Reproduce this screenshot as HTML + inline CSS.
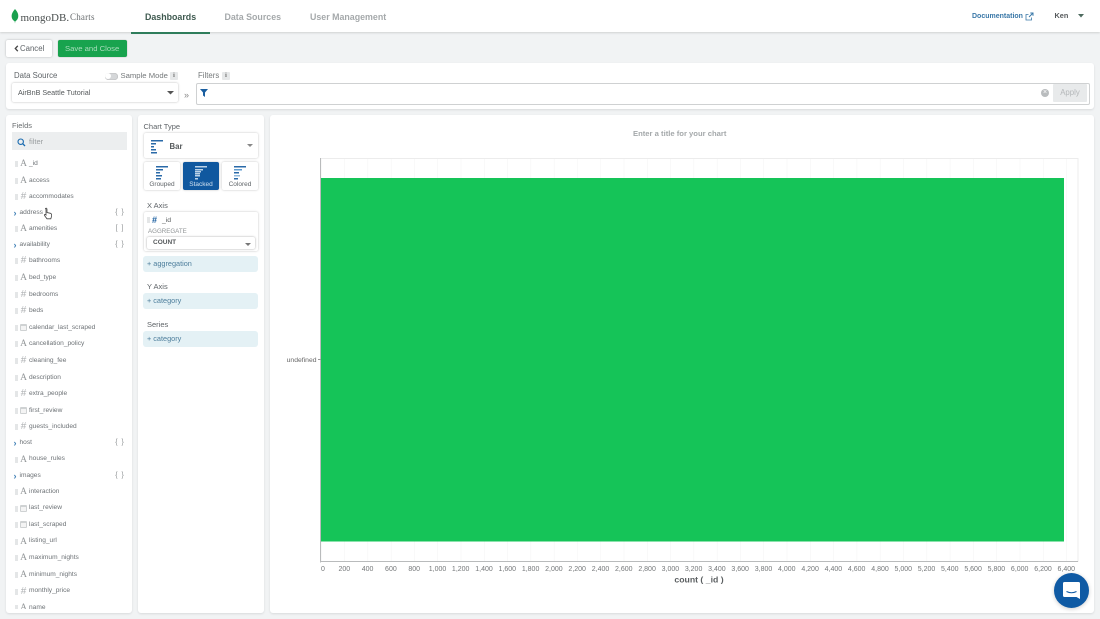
<!DOCTYPE html>
<html><head><meta charset="utf-8"><title>MongoDB Charts</title>
<style>
html,body{margin:0;padding:0;width:1100px;height:619px;overflow:hidden;background:#f1f3f4;font-family:"Liberation Sans",Arial,sans-serif;color:#5f6468}
#w{position:absolute;left:0;top:0;width:1100px;height:619px;overflow:hidden;background:#f1f3f4;filter:blur(.3px)}
.a,.t{position:absolute}
.t{white-space:nowrap;line-height:10px}
.card{position:absolute;background:#fff;border-radius:3px;box-shadow:0 1px 2px rgba(0,0,0,.1)}
.f{font-size:6.6px;color:#6d7276;height:10px;line-height:10px}
.g{position:absolute;left:15px;width:3px;height:6px;background:#e4e6e7}
.i{position:absolute;left:19.500px;width:8px;text-align:center;font-size:9.500px;line-height:10px;color:#94989a;font-family:"Liberation Serif",serif}
.h{font-family:"Liberation Sans",sans-serif;font-size:10px;color:#b0b3b5}
.c{position:absolute;left:20px;width:5px;height:4px;border:1px solid #cfd2d3;border-top:2px solid #cfd2d3;border-radius:1px;background:#f4f4f4}
.ar{position:absolute;left:13.500px;font-size:9px;font-weight:bold;line-height:10px;color:#3f7fb5}
.br{position:absolute;left:115px;width:10px;text-align:center;font-size:7px;line-height:10px;color:#8d9193;letter-spacing:1px}
.pill{position:absolute;left:143px;width:115px;background:#e4f1f5;border-radius:3px;font-size:7.300px;line-height:16px;height:16px;color:#4d7e9c;text-indent:4px}
.lb{font-size:7.500px;color:#5f6468}
.tb{position:absolute;top:162px;height:28px;background:#fff;border-radius:2px;box-shadow:0 0 2px rgba(0,0,0,.25);font-size:6.500px;text-align:center;color:#5f6468}
.tb span{position:absolute;left:0;right:0;top:19px;line-height:8px}
</style></head><body><div id="w">

<!-- Navbar -->
<div class="a" style="left:0;top:0;width:1100px;height:32px;background:#fff;box-shadow:0 1px 2px rgba(0,0,0,.14)"></div>
<svg class="a" style="left:11px;top:9px" width="8" height="15" viewBox="0 0 8 15"><path d="M4 0C6.600 3 7.600 5.200 7.200 8 6.900 10.300 5.400 11.600 4.300 12.400L4 14.500 3.700 12.400C2.500 11.500 .9 10.300.7 8 .4 5.200 1.500 3 4 0Z" fill="#1aa04e"/></svg>
<div class="t" style="left:20.500px;top:11px;font:11px/14px 'Liberation Serif',serif;color:#4a4f4f">mongoDB.</div>
<div class="t" style="left:70px;top:12px;font:9px/11px 'Liberation Serif',serif;color:#6a6e70;letter-spacing:.2px">Charts</div>
<div class="t" style="left:145px;top:11px;font-size:8.850px;line-height:12px;font-weight:bold;color:#3f5a50">Dashboards</div>
<div class="a" style="left:131px;top:32px;width:79px;height:2px;background:#2f7d5b"></div>
<div class="t" style="left:224.500px;top:11px;font-size:8.850px;line-height:12px;font-weight:bold;color:#a5a9ab">Data Sources</div>
<div class="t" style="left:310px;top:11px;font-size:8.850px;line-height:12px;font-weight:bold;color:#a5a9ab">User Management</div>
<div class="t" style="left:972px;top:12px;font-size:7px;font-weight:bold;color:#3a78a8">Documentation</div>
<svg class="a" style="left:1025px;top:12px" width="9" height="9" viewBox="0 0 9 9"><path d="M6.500 5.500V8H1V2.500H3.500" fill="none" stroke="#3a78a8" stroke-width=".8"/><path d="M4 5L7.500 1.500M5.300 1H8V3.700" fill="none" stroke="#3a78a8" stroke-width="1"/></svg>
<div class="t" style="left:1054.500px;top:11px;font-size:7.300px;font-weight:bold;color:#55595b">Ken</div>
<svg class="a" style="left:1078px;top:14px" width="6" height="4"><path d="M0 0H6L3 3.500Z" fill="#4d6a5e"/></svg>

<!-- Buttons -->
<div class="a" style="left:6px;top:40px;width:46px;height:17px;background:#fff;border-radius:2px;box-shadow:0 0 2px rgba(0,0,0,.25)"></div>
<svg class="a" style="left:14px;top:45px" width="5" height="7"><path d="M3.800 .8L1.300 3.500 3.800 6.200" fill="none" stroke="#444" stroke-width="1.300"/></svg>
<div class="t" style="left:20px;top:43.500px;font-size:7.800px;color:#5f6468">Cancel</div>
<div class="a" style="left:58px;top:40px;width:69px;height:17px;background:#18a34e;border-radius:2px;box-shadow:0 0 1px rgba(0,0,0,.4)"></div>
<div class="t" style="left:65px;top:43.500px;font-size:7.700px;color:#a8dcbb">Save and Close</div>

<!-- Data bar -->
<div class="card" style="left:6px;top:63px;width:1088px;height:46px"></div>
<div class="t" style="left:14px;top:71px;font-size:7.800px;color:#5f6468">Data Source</div>
<div class="a" style="left:104.500px;top:72.500px;width:13px;height:7px;border-radius:4px;background:#d5d7d9;box-shadow:inset 0 0 1px #888"></div>
<div class="a" style="left:105px;top:73px;width:6px;height:6px;border-radius:3px;background:#fff"></div>
<div class="t" style="left:120.500px;top:71px;font-size:7.700px;color:#75797b">Sample Mode</div>
<div class="a" style="left:170px;top:71.500px;width:8px;height:8px;background:#e6e8e9;border-radius:1px;font:bold 6px/8px 'Liberation Serif',serif;text-align:center;color:#666">i</div>
<div class="t" style="left:198px;top:71px;font-size:7.800px;color:#75797b">Filters</div>
<div class="a" style="left:222px;top:71.500px;width:8px;height:8px;background:#e6e8e9;border-radius:1px;font:bold 6px/8px 'Liberation Serif',serif;text-align:center;color:#666">i</div>
<div class="a" style="left:12px;top:83px;width:166px;height:19px;background:#fff;border-radius:2px;box-shadow:0 0 2px rgba(0,0,0,.28)"></div>
<div class="t" style="left:18px;top:88px;font-size:7.200px;color:#55595b">AirBnB Seattle Tutorial</div>
<svg class="a" style="left:167px;top:90.500px" width="7" height="4"><path d="M0 0H7L3.500 3.500Z" fill="#555"/></svg>
<div class="t" style="left:184px;top:90px;font-size:9px;color:#888">»</div>
<div class="a" style="left:195.500px;top:82.500px;width:892px;height:20px;background:#fff;border:1px solid #cfd1d2;border-radius:2px"></div>
<svg class="a" style="left:200px;top:89px" width="8" height="8"><path d="M0 0H8L5 3.500V8L3 6.500V3.500Z" fill="#1a5ea0"/></svg>
<div class="a" style="left:1041px;top:89px;width:8px;height:8px;border-radius:4px;background:#b9bcbe;color:#fff;font-size:7px;line-height:8px;text-align:center">×</div>
<div class="a" style="left:1053px;top:84px;width:34px;height:18px;background:#e8eaeb;border-radius:1px;font-size:7.800px;line-height:18px;text-align:center;color:#b4b7b9">Apply</div>

<!-- Fields panel -->
<div class="card" style="left:6px;top:115px;width:126px;height:498px;overflow:hidden"></div>
<div class="t" style="left:12px;top:121px;font-size:7.500px;color:#6b6f71">Fields</div>
<div class="a" style="left:12px;top:132px;width:115px;height:18px;background:#eceeef"></div>
<svg class="a" style="left:17px;top:137.500px" width="9" height="9" viewBox="0 0 9 9"><circle cx="3.700" cy="3.700" r="2.700" fill="none" stroke="#1a6bb0" stroke-width="1.100"/><path d="M5.700 5.700L8 8" stroke="#1a6bb0" stroke-width="1.300"/></svg>
<div class="t" style="left:29px;top:136.500px;font-size:7.500px;color:#9a9ea0">filter</div>

<div class="a" style="left:0;top:115px;width:132px;height:494px;overflow:hidden">
<div class="a" style="left:0;top:-114px;width:132px;height:640px">
<div class="g" style="top:160px"></div><div class="i" style="top:158px">A</div><div class="t f" style="left:29px;top:158px">_id</div>
<div class="g" style="top:177px"></div><div class="i" style="top:175px">A</div><div class="t f" style="left:29px;top:175px">access</div>
<div class="g" style="top:193px"></div><div class="i h" style="top:191px">#</div><div class="t f" style="left:29px;top:191px">accommodates</div>
<div class="ar" style="top:207px">›</div><div class="t f" style="left:19.500px;top:207px">address</div><div class="br" style="top:207px">{ }</div>
<div class="g" style="top:225px"></div><div class="i" style="top:223px">A</div><div class="t f" style="left:29px;top:223px">amenities</div><div class="br" style="top:223px">[ ]</div>
<div class="ar" style="top:239px">›</div><div class="t f" style="left:19.500px;top:239px">availability</div><div class="br" style="top:239px">{ }</div>
<div class="g" style="top:257px"></div><div class="i h" style="top:255px">#</div><div class="t f" style="left:29px;top:255px">bathrooms</div>
<div class="g" style="top:274px"></div><div class="i" style="top:272px">A</div><div class="t f" style="left:29px;top:272px">bed_type</div>
<div class="g" style="top:291px"></div><div class="i h" style="top:289px">#</div><div class="t f" style="left:29px;top:289px">bedrooms</div>
<div class="g" style="top:307px"></div><div class="i h" style="top:305px">#</div><div class="t f" style="left:29px;top:305px">beds</div>
<div class="g" style="top:324px"></div><div class="c" style="top:323px"></div><div class="t f" style="left:29px;top:322px">calendar_last_scraped</div>
<div class="g" style="top:340px"></div><div class="i" style="top:338px">A</div><div class="t f" style="left:29px;top:338px">cancellation_policy</div>
<div class="g" style="top:357px"></div><div class="i h" style="top:355px">#</div><div class="t f" style="left:29px;top:355px">cleaning_fee</div>
<div class="g" style="top:374px"></div><div class="i" style="top:372px">A</div><div class="t f" style="left:29px;top:372px">description</div>
<div class="g" style="top:390px"></div><div class="i h" style="top:388px">#</div><div class="t f" style="left:29px;top:388px">extra_people</div>
<div class="g" style="top:407px"></div><div class="c" style="top:406px"></div><div class="t f" style="left:29px;top:405px">first_review</div>
<div class="g" style="top:423px"></div><div class="i h" style="top:421px">#</div><div class="t f" style="left:29px;top:421px">guests_included</div>
<div class="ar" style="top:437px">›</div><div class="t f" style="left:19.500px;top:437px">host</div><div class="br" style="top:437px">{ }</div>
<div class="g" style="top:456px"></div><div class="i" style="top:454px">A</div><div class="t f" style="left:29px;top:453px">house_rules</div>
<div class="ar" style="top:470px">›</div><div class="t f" style="left:19.500px;top:470px">images</div><div class="br" style="top:470px">{ }</div>
<div class="g" style="top:488px"></div><div class="i" style="top:486px">A</div><div class="t f" style="left:29px;top:486px">interaction</div>
<div class="g" style="top:505px"></div><div class="c" style="top:504px"></div><div class="t f" style="left:29px;top:502px">last_review</div>
<div class="g" style="top:521px"></div><div class="c" style="top:520px"></div><div class="t f" style="left:29px;top:519px">last_scraped</div>
<div class="g" style="top:538px"></div><div class="i" style="top:536px">A</div><div class="t f" style="left:29px;top:535px">listing_url</div>
<div class="g" style="top:554px"></div><div class="i" style="top:552px">A</div><div class="t f" style="left:29px;top:552px">maximum_nights</div>
<div class="g" style="top:571px"></div><div class="i" style="top:569px">A</div><div class="t f" style="left:29px;top:569px">minimum_nights</div>
<div class="g" style="top:588px"></div><div class="i h" style="top:586px">#</div><div class="t f" style="left:29px;top:585px">monthly_price</div>
<div class="g" style="top:604px"></div><div class="i" style="top:602px">A</div><div class="t f" style="left:29px;top:602px">name</div>
</div></div>
<!-- cursor -->
<svg class="a" style="left:43px;top:207px" width="10" height="13" viewBox="0 0 10 13"><path d="M2.500 1.500C3.500 .8 4 1.500 4 2.500V5.500L7.500 6.300C8.800 6.800 8.800 8 8.500 9.500L7.800 11.800H4L1.500 8.500C1 7.500 2 7 3 8V2.500Z" fill="#fff" stroke="#444" stroke-width=".8"/></svg>

<!-- Chart builder panel -->
<div class="card" style="left:138px;top:115px;width:126px;height:498px"></div>
<div class="t lb" style="left:143.500px;top:122px">Chart Type</div>
<div class="a" style="left:143.500px;top:133px;width:114px;height:25px;background:#fff;border-radius:2px;box-shadow:0 0 2px rgba(0,0,0,.25)"></div>
<svg class="a" style="left:150px;top:139px" width="15" height="15"><path d="M1 1h12v1.500H1zM1 4h5v1.500H1zM1 7h3v1.500H1zM1 10h5v1.500H1zM1 13h6v1.500H1z" fill="#2a6aa8"/></svg>
<div class="t" style="left:169.500px;top:141.500px;font-size:7.800px;font-weight:bold;color:#55595b">Bar</div>
<svg class="a" style="left:247px;top:144px" width="6" height="4"><path d="M0 0H6L3 3Z" fill="#888"/></svg>

<div class="tb" style="left:144px;width:36px"><svg class="a" style="left:11px;top:3px" width="14" height="15"><path d="M1 1h12v1.500H1zM1 4h7v1.500H1zM1 7h4v1.500H1zM1 10h6v1.500H1zM1 13h5v1.500H1z" fill="#2a6aa8"/></svg><span>Grouped</span></div>
<div class="tb" style="left:183px;width:36px;background:#10589f;color:#cfe0ef"><svg class="a" style="left:11px;top:3px" width="14" height="15"><path d="M1 1h12v1.500H1zM1 4h8v1.500H1zM1 6h6v1.500H1zM1 8h5v1.500H1zM1 10h5v1.500H1zM1 13h3v1.500H1z" fill="#bcd3e8"/></svg><span>Stacked</span></div>
<div class="tb" style="left:222px;width:36px"><svg class="a" style="left:11px;top:3px" width="14" height="15"><path d="M1 1h12v1.500H1z" fill="#2a6aa8"/><path d="M1 4h8v1.500H1z" fill="#5d9bd0"/><path d="M1 7h5v1.500H1z" fill="#2a6aa8"/><path d="M1 10h6v1.500H1z" fill="#8fb9dc"/><path d="M1 13h4v1.500H1z" fill="#2a6aa8"/></svg><span>Colored</span></div>

<div class="t lb" style="left:147px;top:201px">X Axis</div>
<div class="a" style="left:143.500px;top:212px;width:114px;height:39px;background:#fff;border-radius:2px;box-shadow:0 0 2px rgba(0,0,0,.25)"></div>
<div class="a" style="left:146.500px;top:217px;width:3px;height:6px;background:#e4e6e7"></div>
<div class="t" style="left:152px;top:215px;font-size:9px;font-weight:bold;color:#1a5ea0">#</div>
<div class="t" style="left:162px;top:215.500px;font-size:6.800px;color:#55595b">_id</div>
<div class="t" style="left:148px;top:227px;font-size:6.200px;color:#909496">AGGREGATE</div>
<div class="a" style="left:146.500px;top:237px;width:108px;height:12px;background:#fff;border-radius:2px;box-shadow:0 0 2px rgba(0,0,0,.35)"></div>
<div class="t" style="left:153px;top:238px;font-size:6.500px;font-weight:bold;color:#55595b">COUNT</div>
<svg class="a" style="left:244.500px;top:242.500px" width="6" height="4"><path d="M0 0H6L3 3Z" fill="#777"/></svg>
<div class="pill" style="top:255.500px">+ aggregation</div>
<div class="t lb" style="left:147px;top:282px">Y Axis</div>
<div class="pill" style="top:293px">+ category</div>
<div class="t lb" style="left:147px;top:320px">Series</div>
<div class="pill" style="top:331px">+ category</div>

<!-- Chart panel -->
<div class="card" style="left:270px;top:115px;width:824px;height:498px"></div>
<div class="t" style="left:633px;top:129px;font-size:7.650px;font-weight:bold;color:#a4a8aa">Enter a title for your chart</div>
<svg class="a" style="left:270px;top:150px" width="824" height="450" viewBox="270 150 824 450">
<defs><pattern id="gr" x="321" y="0" width="23.290" height="10" patternUnits="userSpaceOnUse"><path d="M0 0V10" stroke="#f0f1f1" stroke-width=".8"/></pattern></defs>
<rect x="321" y="158" width="757" height="404" fill="url(#gr)"/>
<path d="M321 158.500H1078V562" fill="none" stroke="#ececec" stroke-width="1"/>
<rect x="321" y="178" width="743" height="363.500" fill="#15c458"/>
<path d="M320.500 158V562.500" stroke="#b9bbbc" stroke-width="1"/>
<path d="M320 561.500H1078" stroke="#b9bbbc" stroke-width="1"/>
<path d="M318 359.500H321" stroke="#999" stroke-width="1"/>
<text x="316.500" y="362" text-anchor="end" font-family="Liberation Sans" font-size="6.800" fill="#666">undefined</text>
<g font-family="Liberation Sans" font-size="7" fill="#747779" text-anchor="middle">
<text x="323" y="571">0</text><text x="344.300" y="571">200</text><text x="367.600" y="571">400</text><text x="390.900" y="571">600</text><text x="414.200" y="571">800</text><text x="437.500" y="571">1,000</text><text x="460.700" y="571">1,200</text><text x="484" y="571">1,400</text><text x="507.300" y="571">1,600</text><text x="530.600" y="571">1,800</text><text x="553.900" y="571">2,000</text><text x="577.200" y="571">2,200</text><text x="600.500" y="571">2,400</text><text x="623.800" y="571">2,600</text><text x="647.100" y="571">2,800</text><text x="670.400" y="571">3,000</text><text x="693.600" y="571">3,200</text><text x="716.900" y="571">3,400</text><text x="740.200" y="571">3,600</text><text x="763.500" y="571">3,800</text><text x="786.800" y="571">4,000</text><text x="810.100" y="571">4,200</text><text x="833.400" y="571">4,400</text><text x="856.700" y="571">4,600</text><text x="880" y="571">4,800</text><text x="903.300" y="571">5,000</text><text x="926.500" y="571">5,200</text><text x="949.800" y="571">5,400</text><text x="973.100" y="571">5,600</text><text x="996.400" y="571">5,800</text><text x="1019.700" y="571">6,000</text><text x="1043" y="571">6,200</text><text x="1066.300" y="571">6,400</text>
</g>
<text x="699" y="582.500" text-anchor="middle" font-family="Liberation Sans" font-size="8.700" font-weight="bold" fill="#5a5e60">count ( _id )</text>
</svg>

<!-- Chat bubble -->
<div class="a" style="left:1054px;top:573px;width:35px;height:35px;border-radius:50%;background:#0f5aa4;box-shadow:0 1px 4px rgba(0,0,0,.2)"></div>
<svg class="a" style="left:1062px;top:581px" width="19" height="19" viewBox="0 0 19 19"><path d="M2.500 1H16.500Q18 1 18 2.500V18L14.500 16H2.500Q1 16 1 14.500V2.500Q1 1 2.500 1Z" fill="#fff"/><path d="M4.500 10.500Q9.500 13 14.500 10.500" fill="none" stroke="#0f5aa4" stroke-width="1"/></svg>

</div></body></html>
